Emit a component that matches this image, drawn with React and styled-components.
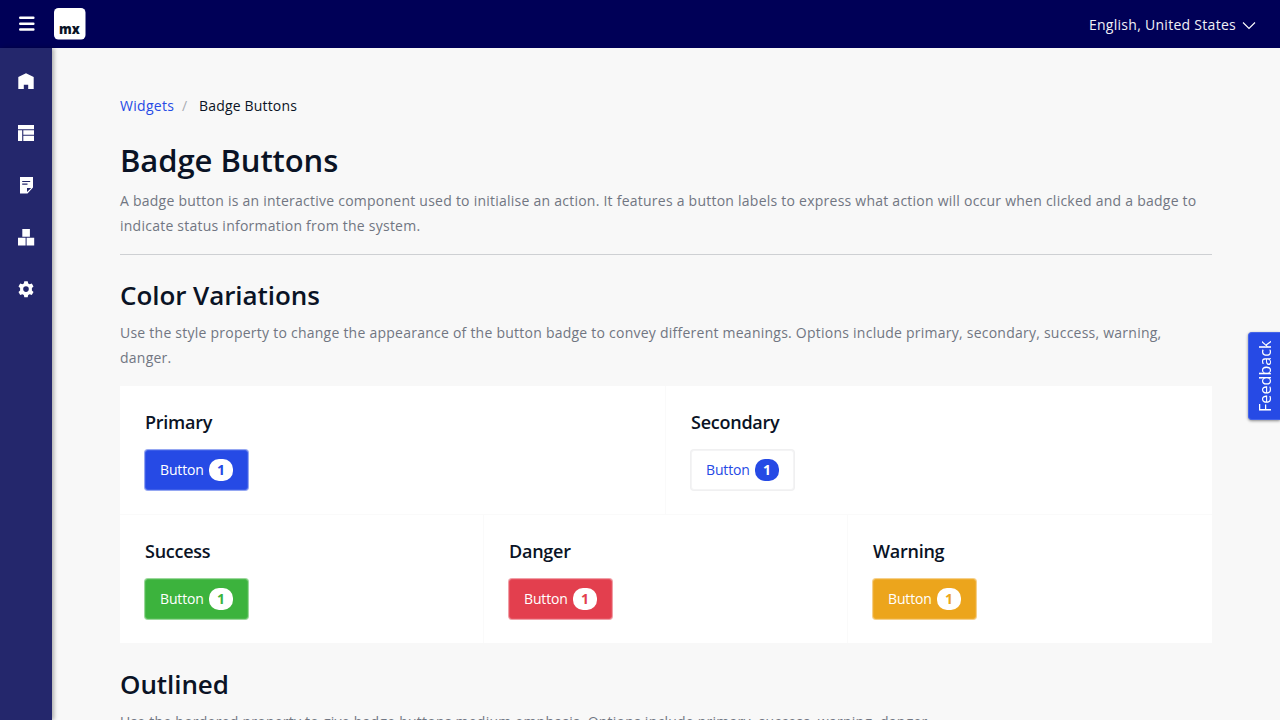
import React from "react";
import styled, { createGlobalStyle } from "styled-components";

const GlobalStyle = createGlobalStyle`
  * { box-sizing: border-box; }
  html, body { margin: 0; height: 100%; overflow: hidden; }
  body {
    font-family: "Open Sans", sans-serif;
    font-size: 14px;
    color: #0a1325;
    background: #f8f8f8;
  }
  h1, h2, h4, p { margin: 0; }
`;

const Page = styled.div`
  height: 720px;
  display: flex;
  flex-direction: column;
  overflow: hidden;
`;

const TopBar = styled.header`
  flex: 0 0 48px;
  display: flex;
  align-items: center;
  padding: 0 24px 0 18px;
  background: #000057;
  color: #fff;
`;

const MenuIcon = styled.svg`
  width: 18px;
  height: 18px;
  display: block;
`;

const Logo = styled.svg`
  width: 32px;
  height: 32px;
  margin-left: 18px;
  display: block;
`;

const Language = styled.div`
  margin-left: auto;
  display: flex;
  align-items: center;
  gap: 6px;
  line-height: 22px;
  padding-top: 2px;
  letter-spacing: 0.28px;
  color: #f0f0f6;
  svg { margin-top: 2px; }
`;

const Body = styled.div`
  flex: 1;
  display: flex;
  min-height: 0;
`;

const SideBar = styled.nav`
  flex: 0 0 52px;
  display: flex;
  flex-direction: column;
  padding-top: 7px;
  background: #24276c;
  box-shadow: 2px 0 4px rgba(0, 0, 0, 0.3);
`;

const SideItem = styled.a`
  height: 52px;
  display: flex;
  align-items: center;
  justify-content: center;
  color: #fff;
  svg { width: 16px; height: 16px; display: block; }
`;

const Content = styled.main`
  flex: 1;
  padding: 46px 68px 0;
  overflow: hidden;
`;

const Breadcrumb = styled.div`
  display: flex;
  line-height: 24px;
  letter-spacing: 0.17px;
`;

const Crumb = styled.span`
  width: ${(p) => (p.$link ? "54px" : "auto")};
  letter-spacing: ${(p) => (p.$link ? "0.3px" : "inherit")};
  color: ${(p) => (p.$link ? "#264ae5" : "#0a1325")};
`;

const Separator = styled.span`
  color: #a9acb3;
  width: 25px;
  padding-left: 8px;
`;

const Title = styled.h1`
  margin-top: 22px;
  font-size: 31px;
  line-height: 41px;
  height: 40px;
  font-weight: 600;
  letter-spacing: -0.07px;
`;

const Heading = styled.h2`
  font-size: 26px;
  line-height: 32px;
  font-weight: 600;
  letter-spacing: -0.07px;
  margin-top: ${(p) => p.$gap}px;
`;

const Text = styled.p`
  margin-top: ${(p) => p.$gap || 9}px;
  color: #717682;
  line-height: 25px;
  letter-spacing: 0.24px;
`;

const Divider = styled.hr`
  margin: 16px 0 0;
  border: 0;
  height: 1px;
  background: #ced0d3;
`;

const Cards = styled.section`
  margin-top: 16px;
`;

const CardRow = styled.div`
  display: grid;
  grid-template-columns: repeat(${(p) => p.$columns}, 1fr);
  height: ${(p) => p.$height}px;
`;

const Card = styled.div`
  background: #fff;
  border: 0 solid #fafafa;
  border-bottom-width: ${(p) => (p.$bottomRow ? 0 : 1)}px;
  padding: 24px 24px 24px 25px;
  &:not(:last-child) { border-right-width: 1px; }
`;

const CardTitle = styled.h4`
  font-size: 18px;
  line-height: 24px;
  font-weight: 600;
  letter-spacing: -0.25px;
`;

const BadgeButton = styled.button`
  display: flex;
  align-items: center;
  justify-content: space-between;
  margin: 16px 0 0;
  height: 40px;
  width: 103px;
  padding: 0 14px;
  border: 1px solid ${(p) => p.$border || p.$bg};
  border-radius: 3px;
  box-shadow: 0 0 0 1px ${(p) => p.$ring};
  background: ${(p) => p.$bg};
  color: ${(p) => p.$fg || "#fff"};
  font: 400 14px/20px "Open Sans", sans-serif;
  letter-spacing: -0.16px;
`;

const Badge = styled.span`
  width: 24px;
  height: 22px;
  flex: none;
  border-radius: 10px;
  background: ${(p) => p.$bg};
  color: ${(p) => p.$fg};
  font-weight: 700;
  line-height: 22px;
  text-align: center;
`;

const Feedback = styled.button`
  position: fixed;
  right: 0;
  top: 332px;
  width: 32px;
  height: 88px;
  padding: 0;
  border: 1px solid #4464e9;
  border-right: 0;
  border-radius: 4px 0 0 4px;
  background: #264ae5;
  color: #fff;
  box-shadow: 0 1px 3px rgba(0, 0, 0, 0.45);
  font: 400 16px/30px "Open Sans", sans-serif;
  letter-spacing: 0.1px;
  writing-mode: vertical-rl;
  span { display: block; transform: rotate(180deg); }
`;

const icons = {
  home: <path d="M8 .2.3 3.9V16h5.5v-4.200h4.400V16h5.500V3.900z" />,
  layout: <path d="M0 0h16v4.200H0zM0 5.200h4.200V16H0zM5.300 5.200H16v4.500H5.300zM5.300 10.800H16V16H5.300z" />,
  note: <path fillRule="evenodd" d="M2 0h13v10.600L9.500 16.400H2zM4.200 4v1.100h8V4zM4.200 6.600v1.100h5.300V6.600zM9 11v4l4.200-4z" />,
  blocks: <path d="M4.300 0h7.600v7.800H4.300zM0 8.700h7.600v7.800H0zM8.600 8.700h7.600v7.800H8.600z" />,
  gear: (
    <path
      fillRule="evenodd"
      d="M6.300.2h3.400l.5 2.200 1.400.8 2.200-.7 1.700 2.900-1.600 1.500v2.600l1.600 1.500-1.700 2.900-2.200-.7-1.400.8-.5 2.200H6.300l-.5-2.200-1.400-.8-2.200.7L.5 11l1.600-1.500V6.900L.5 5.400l1.700-2.900 2.200.7 1.400-.8zM8 5.300a2.800 2.800 0 1 0 0 5.600 2.800 2.800 0 0 0 0-5.600z"
    />
  ),
};

const first = [
  { title: "Primary", bg: "#264ae5", ring: "#95a7f2", border: "#3c5de8" },
  { title: "Secondary", bg: "#fff", ring: "#f0f0f1", border: "#f4f4f5", fg: "#264ae5" },
];
const second = [
  { title: "Success", bg: "#3cb33d", ring: "#9bd89b", border: "#4eba4f" },
  { title: "Danger", bg: "#e33f4e", ring: "#f09fa7", border: "#e6505e" },
  { title: "Warning", bg: "#eca51c", ring: "#f6d08a", border: "#eead30" },
];

function Variation({ item, bottomRow }) {
  return (
    <Card $bottomRow={bottomRow}>
      <CardTitle>{item.title}</CardTitle>
      <BadgeButton $bg={item.bg} $ring={item.ring} $border={item.border} $fg={item.fg}>
        Button
        <Badge $bg={item.fg || "#fff"} $fg={item.bg}>1</Badge>
      </BadgeButton>
    </Card>
  );
}

export default function App() {
  return (
    <Page>
      <GlobalStyle />
      <TopBar>
        <MenuIcon viewBox="0 0 18 18" stroke="#fff" strokeWidth="2.4" strokeLinecap="round">
          <path d="M2.200 2.800h13.200M2.200 8.800h13.200M2.200 14.500h13.200" />
        </MenuIcon>
        <Logo viewBox="0 0 32 32">
          <rect width="31.500" height="31.500" rx="4.500" fill="#fff" />
          <text
            x="5"
            y="25.600"
            fill="#0a1325"
            fontSize="14.800"
            fontWeight="800"
            textLength="20.800"
            lengthAdjust="spacingAndGlyphs"
          >
            mx
          </text>
        </Logo>
        <Language>
          English, United States
          <svg width="14" height="14" viewBox="0 0 14 14" fill="none" stroke="#fff" strokeWidth="1.1">
            <path d="m1 3.500 6 6 6-6" />
          </svg>
        </Language>
      </TopBar>
      <Body>
        <SideBar>
          {Object.entries(icons).map(([name, shape]) => (
            <SideItem key={name}>
              <svg viewBox="0 0 16 16" fill="currentColor" overflow="visible">{shape}</svg>
            </SideItem>
          ))}
        </SideBar>
        <Content>
          <Breadcrumb>
            <Crumb $link>Widgets</Crumb>
            <Separator>/</Separator>
            <Crumb>Badge Buttons</Crumb>
          </Breadcrumb>
          <Title>Badge Buttons</Title>
          <Text $gap={8}>
            A badge button is an interactive component used to initialise an action. It features a button labels to
            express what action will occur when clicked and a badge to indicate status information from the system.
          </Text>
          <Divider />
          <Heading $gap={24}>Color Variations</Heading>
          <Text>
            Use the style property to change the appearance of the button badge to convey different meanings. Options
            include primary, secondary, success, warning, danger.
          </Text>
          <Cards>
            <CardRow $columns={2} $height={129}>
              {first.map((item) => <Variation key={item.title} item={item} />)}
            </CardRow>
            <CardRow $columns={3} $height={128}>
              {second.map((item) => <Variation key={item.title} item={item} bottomRow />)}
            </CardRow>
          </Cards>
          <Heading $gap={25}>Outlined</Heading>
          <Text>
            Use the bordered property to give badge buttons medium emphasis. Options include primary, success,
            warning, danger.
          </Text>
        </Content>
      </Body>
      <Feedback><span>Feedback</span></Feedback>
    </Page>
  );
}
